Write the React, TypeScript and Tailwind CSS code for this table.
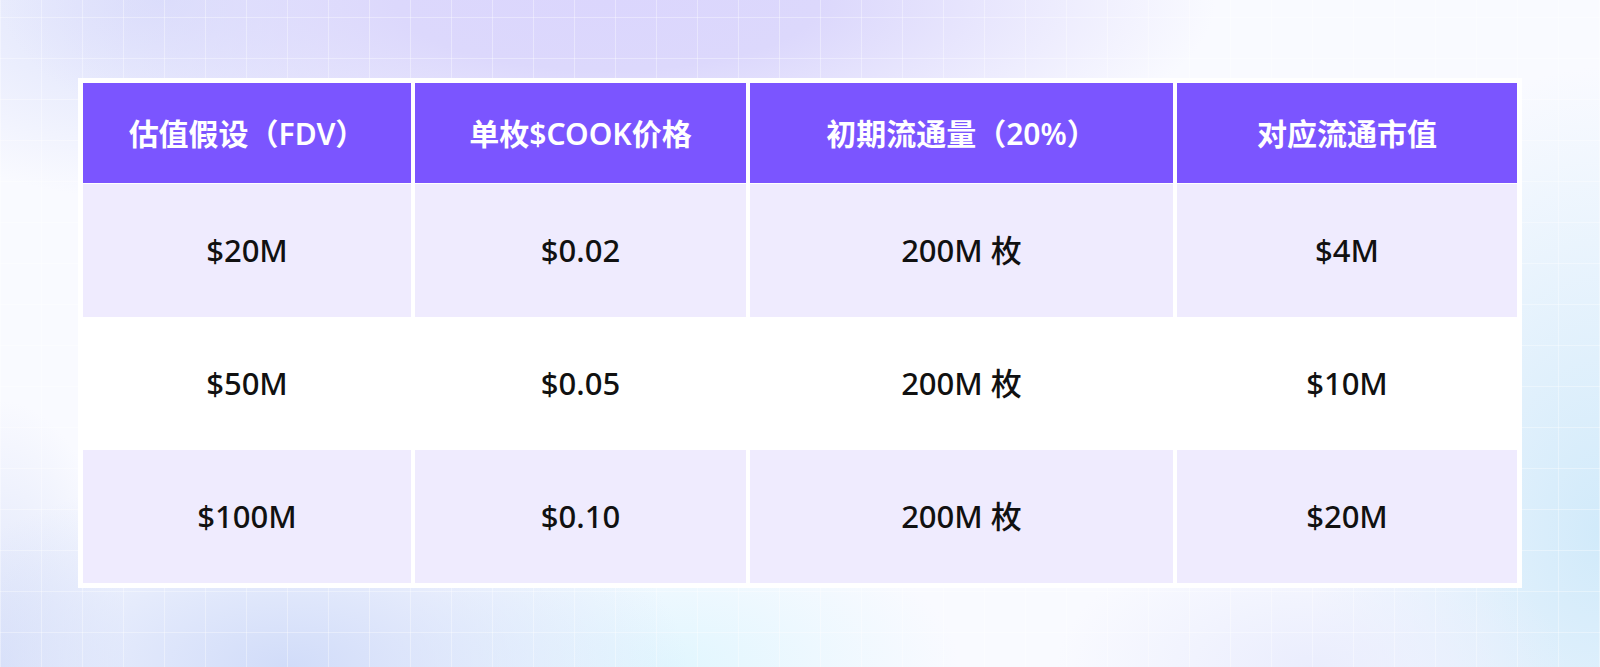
import React from 'react';

const headers = ['估值假设（FDV）', '单枚$COOK价格', '初期流通量（20%）', '对应流通市值'];

const rows = [
  { cells: ['$20M', '$0.02', '200M 枚', '$4M'], tint: true, h: 'h-[133px]' },
  { cells: ['$50M', '$0.05', '200M 枚', '$10M'], tint: false, h: 'h-[131px]' },
  { cells: ['$100M', '$0.10', '200M 枚', '$20M'], tint: true, h: 'h-[133px]' },
];

const font = 'font-["Noto_Sans","Noto_Sans_CJK_SC",sans-serif]';

export default function App() {
  return (
    <div
      className={`relative w-full h-[667px] overflow-hidden ${font} bg-[#f9faff] bg-[radial-gradient(ellipse_38%_30%_at_38%_0%,#dbd6fd_0%,#dcd8fc_35%,rgba(220,216,252,0)_100%),radial-gradient(ellipse_22%_30%_at_10%_0%,#dbe0fb_0%,rgba(219,224,251,0)_100%),radial-gradient(ellipse_25%_30%_at_18%_100%,#d1dcf9_0%,rgba(209,220,249,0)_100%),radial-gradient(ellipse_18%_22%_at_42%_100%,#e1f6fe_0%,rgba(225,246,254,0)_100%),radial-gradient(ellipse_16%_20%_at_82%_100%,#eaedfd_0%,rgba(234,237,253,0)_100%),radial-gradient(ellipse_18%_70%_at_100%_80%,#d1eafa_0%,rgba(209,234,250,0)_100%),radial-gradient(ellipse_8%_40%_at_0%_100%,#dbe2f9_0%,rgba(219,226,249,0)_100%)]`}
    >
      {/* faint grid */}
      <div className="pointer-events-none absolute inset-0 bg-[linear-gradient(to_right,rgba(255,255,255,0.35)_1px,transparent_1px),linear-gradient(to_bottom,rgba(255,255,255,0.35)_1px,transparent_1px)] bg-[size:41px_41px] bg-[position:0px_17px]" />

      <div className="relative pt-[78px] pl-[78px]">
        <div className="w-[1444px] bg-white p-[5px] grid grid-cols-[328px_331px_423px_340px] gap-x-[4px] gap-y-[1px]">
          {headers.map((h) => (
            <div
              key={h}
              className="h-[100px] bg-[#7b55ff] flex items-center justify-center text-white text-[30px] font-semibold"
            >
              {h}
            </div>
          ))}
          {rows.map((r, i) =>
            r.cells.map((c, j) => (
              <div
                key={`${i}-${j}`}
                className={`${r.h} ${r.tint ? 'bg-[#efebfe]' : 'bg-white'} flex items-center justify-center text-[#111] text-[31px] font-medium`}
              >
                {c}
              </div>
            ))
          )}
        </div>
      </div>
    </div>
  );
}
